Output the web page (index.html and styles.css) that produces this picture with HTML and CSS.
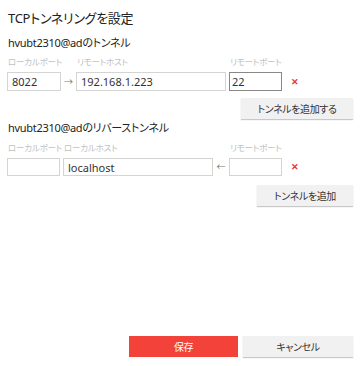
FILE: index.html
```html
<!DOCTYPE html>
<html lang="ja">
<head>
    <meta charset="UTF-8">
    <meta name="viewport" content="width=device-width, initial-scale=1.0">
    <title>TCPトンネリングを設定</title>
    <link rel="stylesheet" href="styles.css">
</head>
<body>
    <div class="dialog">
        <h1 class="title">TCPトンネリングを設定</h1>

        <h2 class="section-title">hvubt2310@adのトンネル</h2>
        <div class="tunnel-row forward">
            <label class="field">
                <span class="field-label">ローカルポート</span>
                <input class="field-input" type="text" value="8022">
            </label>
            <span class="arrow">&#8594;</span>
            <label class="field">
                <span class="field-label">リモートホスト</span>
                <input class="field-input" type="text" value="192.168.1.223">
            </label>
            <span></span>
            <label class="field">
                <span class="field-label">リモートポート</span>
                <input class="field-input focused" type="text" value="22">
            </label>
            <span class="remove">&#10005;</span>
        </div>
        <div class="actions">
            <button class="btn add-btn wide">トンネルを追加する</button>
        </div>

        <h2 class="section-title reverse-title">hvubt2310@adのリバーストンネル</h2>
        <div class="tunnel-row reverse">
            <label class="field">
                <span class="field-label">ローカルポート</span>
                <input class="field-input" type="text" value="">
            </label>
            <span></span>
            <label class="field">
                <span class="field-label">ローカルホスト</span>
                <input class="field-input" type="text" value="localhost">
            </label>
            <span class="arrow">&#8592;</span>
            <label class="field">
                <span class="field-label">リモートポート</span>
                <input class="field-input" type="text" value="">
            </label>
            <span class="remove">&#10005;</span>
        </div>
        <div class="actions">
            <button class="btn add-btn">トンネルを追加</button>
        </div>

        <div class="footer">
            <button class="btn save-btn">保存</button>
            <button class="btn cancel-btn">キャンセル</button>
        </div>
    </div>
</body>
</html>
```

FILE: styles.css
```css
* {
    box-sizing: border-box;
}

html, body {
    margin: 0;
    height: 100%;
    background-color: #fff;
}

body {
    font-family: "Noto Sans", "Noto Sans CJK JP", sans-serif;
    font-feature-settings: "palt";
    color: #333;
}

.dialog {
    display: flex;
    flex-direction: column;
    height: 100vh;
    padding: 8px 7px 9px 7px;
}

.title {
    margin: 0 0 0 1px;
    font-size: 13px;
    font-weight: normal;
    line-height: 20px;
    letter-spacing: -0.3px;
    color: #222;
}

.section-title {
    margin: 7px 0 0 1px;
    font-size: 11px;
    font-weight: normal;
    line-height: 16px;
    letter-spacing: -0.3px;
    color: #222;
}

.section-title.reverse-title {
    margin-top: 1px;
}

.tunnel-row {
    display: grid;
    align-items: end;
    margin-top: 4px;
}

.tunnel-row.forward {
    grid-template-columns: 54px 15px 150px 3px 53px 22px;
}

.tunnel-row.reverse {
    margin-top: 5px;
    grid-template-columns: 53px 3px 150px 16px 53px 22px;
}

.field {
    display: flex;
    flex-direction: column;
    gap: 3px;
    min-width: 0;
}

.field-label {
    font-size: 8.5px;
    line-height: 14px;
    letter-spacing: -0.2px;
    color: #c2c2c2;
    padding-left: 1px;
    white-space: nowrap;
}

.field-input {
    width: 100%;
    height: 19px;
    margin: 0;
    padding: 0 4px;
    border: 1px solid #d4d4d4;
    font-family: inherit;
    font-size: 11px;
    color: #333;
    background-color: #fff;
    outline: none;
}

.reverse .field-input {
    height: 18px;
}

.field-input.focused {
    border-color: #888;
    padding-left: 2px;
}

.arrow {
    height: 19px;
    line-height: 19px;
    text-align: center;
    font-size: 9px;
    color: #777;
}

.reverse .arrow {
    height: 18px;
    line-height: 18px;
}

.remove {
    height: 19px;
    line-height: 19px;
    text-align: right;
    font-size: 9px;
    font-weight: bold;
    color: #e53935;
    padding-right: 5px;
}

.reverse .remove {
    height: 18px;
    line-height: 18px;
}

.actions {
    display: flex;
    justify-content: flex-end;
    margin-top: 7px;
}

.reverse + .actions {
    margin-top: 9px;
}

.btn {
    height: 21px;
    margin: 0;
    padding: 0;
    border: none;
    font-family: inherit;
    font-feature-settings: "palt";
    font-size: 10px;
    letter-spacing: -0.4px;
    color: #333;
    background-color: #f1f1f1;
    box-shadow: 0 1px 1px #c8c8c8;
    cursor: pointer;
}

.add-btn {
    width: 96px;
}

.add-btn.wide {
    width: 112px;
}

.footer {
    display: flex;
    justify-content: flex-end;
    gap: 5px;
    margin-top: auto;
}

.save-btn {
    width: 109px;
    background-color: #f2423a;
    color: #fff;
    box-shadow: none;
}

.cancel-btn {
    width: 110px;
}
```
